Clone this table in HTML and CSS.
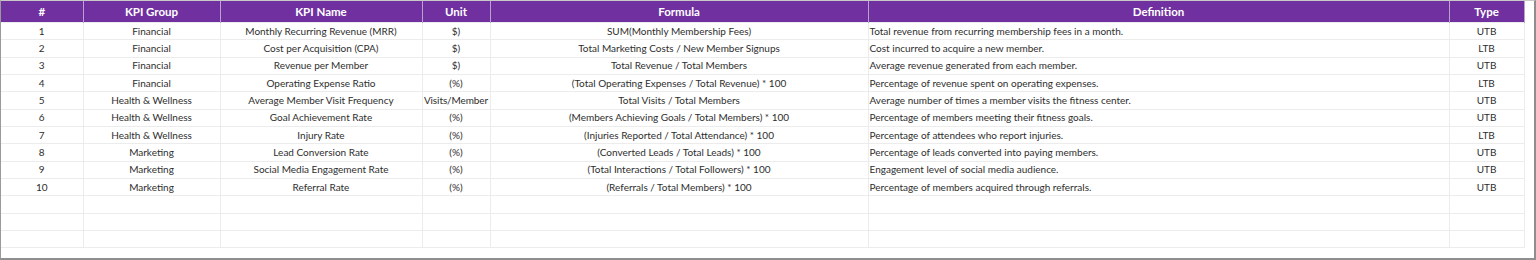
FILE: index.html
```html
<!DOCTYPE html>
<html>
<head>
<meta charset="utf-8">
<link rel="stylesheet" href="styles.css">
</head>
<body>
<div class="frame">
  <table class="kpi">
    <colgroup>
      <col class="c-num"><col class="c-group"><col class="c-name"><col class="c-unit"><col class="c-formula"><col class="c-def"><col class="c-type">
    </colgroup>
    <thead>
      <tr><th>#</th><th>KPI Group</th><th>KPI Name</th><th>Unit</th><th>Formula</th><th>Definition</th><th>Type</th></tr>
    </thead>
    <tbody>
      <tr><td>1</td><td>Financial</td><td>Monthly Recurring Revenue (MRR)</td><td>$)</td><td>SUM(Monthly Membership Fees)</td><td class="def">Total revenue from recurring membership fees in a month.</td><td>UTB</td></tr>
      <tr><td>2</td><td>Financial</td><td>Cost per Acquisition (CPA)</td><td>$)</td><td>Total Marketing Costs / New Member Signups</td><td class="def">Cost incurred to acquire a new member.</td><td>LTB</td></tr>
      <tr><td>3</td><td>Financial</td><td>Revenue per Member</td><td>$)</td><td>Total Revenue / Total Members</td><td class="def">Average revenue generated from each member.</td><td>UTB</td></tr>
      <tr><td>4</td><td>Financial</td><td>Operating Expense Ratio</td><td>(%)</td><td>(Total Operating Expenses / Total Revenue) * 100</td><td class="def">Percentage of revenue spent on operating expenses.</td><td>LTB</td></tr>
      <tr><td>5</td><td>Health &amp; Wellness</td><td>Average Member Visit Frequency</td><td class="tight">Visits/Member</td><td>Total Visits / Total Members</td><td class="def">Average number of times a member visits the fitness center.</td><td>UTB</td></tr>
      <tr><td>6</td><td>Health &amp; Wellness</td><td>Goal Achievement Rate</td><td>(%)</td><td>(Members Achieving Goals / Total Members) * 100</td><td class="def">Percentage of members meeting their fitness goals.</td><td>UTB</td></tr>
      <tr><td>7</td><td>Health &amp; Wellness</td><td>Injury Rate</td><td>(%)</td><td>(Injuries Reported / Total Attendance) * 100</td><td class="def">Percentage of attendees who report injuries.</td><td>LTB</td></tr>
      <tr><td>8</td><td>Marketing</td><td>Lead Conversion Rate</td><td>(%)</td><td>(Converted Leads / Total Leads) * 100</td><td class="def">Percentage of leads converted into paying members.</td><td>UTB</td></tr>
      <tr><td>9</td><td>Marketing</td><td>Social Media Engagement Rate</td><td>(%)</td><td>(Total Interactions / Total Followers) * 100</td><td class="def">Engagement level of social media audience.</td><td>UTB</td></tr>
      <tr><td>10</td><td>Marketing</td><td>Referral Rate</td><td>(%)</td><td>(Referrals / Total Members) * 100</td><td class="def">Percentage of members acquired through referrals.</td><td>UTB</td></tr>
      <tr class="empty"><td></td><td></td><td></td><td></td><td></td><td></td><td></td></tr>
      <tr class="empty"><td></td><td></td><td></td><td></td><td></td><td></td><td></td></tr>
      <tr class="empty"><td></td><td></td><td></td><td></td><td></td><td></td><td></td></tr>
    </tbody>
  </table>
</div>
</body>
</html>
```

FILE: styles.css
```css
html, body {
  margin: 0;
  padding: 0;
  background: #ffffff;
}

.frame {
  box-sizing: border-box;
  width: 1536px;
  height: 260px;
  border-top: 1px solid #c8c8c8;
  border-left: 1px solid #9a9a9a;
  border-right: 2px solid #8e8e8e;
  border-bottom: 2px solid #8e8e8e;
  background: #ffffff;
}

.kpi {
  table-layout: fixed;
  border-collapse: collapse;
  width: 1523px;
  font-family: Lato, "Noto Sans", sans-serif;
  font-size: 10px;
  color: #2e2e2e;
}

.c-num { width: 82px; }
.c-group { width: 137px; }
.c-name { width: 202px; }
.c-unit { width: 68px; }
.c-formula { width: 378px; }
.c-def { width: 581px; }
.c-type { width: 75px; }

.kpi th {
  background: #7030a0;
  color: #ffffff;
  font-weight: 700;
  font-size: 11.5px;
  height: 21px;
  padding: 0;
  text-align: center;
  border-left: 1px solid #b9a0cf;
  border-right: 1px solid #b9a0cf;
}

.kpi th:first-child { border-left: none; }

.kpi td {
  height: 16.35px;
  padding: 0 1px;
  text-align: center;
  white-space: nowrap;
  overflow: hidden;
  border: 1px solid #ececec;
  line-height: 15px;
}

.kpi td:first-child { border-left: none; }

.kpi td.tight {
  padding: 0;
  letter-spacing: -0.1px;
}

.kpi td.def {
  text-align: left;
}
```
